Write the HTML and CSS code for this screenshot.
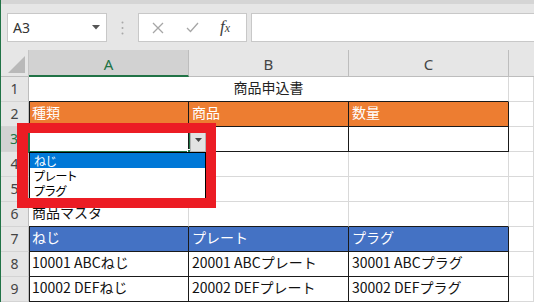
FILE: index.html
```html
<!DOCTYPE html>
<html lang="ja">
<head>
<meta charset="utf-8">
<title>商品申込書</title>
<link rel="stylesheet" href="styles.css">
</head>
<body>
<div class="app">
  <div class="topband"></div>
  <div class="fbar">
    <div class="namebox">
      <span class="nb-text">A3</span>
      <svg class="nb-arrow" width="8" height="5" viewBox="0 0 8 5"><path d="M0 0H8L4 4.5Z" fill="#555"/></svg>
    </div>
    <div class="sep">
      <svg width="3" height="14" viewBox="0 0 3 14"><circle cx="1.5" cy="1.5" r="1" fill="#a8a8a8"/><circle cx="1.5" cy="7" r="1" fill="#a8a8a8"/><circle cx="1.5" cy="12.5" r="1" fill="#a8a8a8"/></svg>
    </div>
    <div class="fbtns">
      <svg class="ic" width="12" height="12" viewBox="0 0 12 12"><path d="M1 1L11 11M11 1L1 11" stroke="#a6a6a6" stroke-width="1.3" fill="none"/></svg>
      <svg class="ic" width="13" height="11" viewBox="0 0 13 11"><path d="M1 6L4.5 9.5L12 1" stroke="#a6a6a6" stroke-width="1.3" fill="none"/></svg>
      <span class="fx">f<span class="fxx">x</span></span>
    </div>
    <div class="finput"></div>
  </div>
  <div class="sheet">
    <div class="corner"><div class="tri"></div></div>
    <div class="ch sel">A</div>
    <div class="ch">B</div>
    <div class="ch">C</div>
    <div class="ch last"></div>

    <div class="rh">1</div>
    <div class="c merged tb">商品申込書</div>
    <div class="c"></div>

    <div class="rh">2</div>
    <div class="c bk or la">種類</div>
    <div class="c bk or">商品</div>
    <div class="c bk or">数量</div>
    <div class="c"></div>

    <div class="rh sel">3</div>
    <div class="c bk la"></div>
    <div class="c bk"></div>
    <div class="c bk"></div>
    <div class="c"></div>

    <div class="rh">4</div>
    <div class="c"></div><div class="c"></div><div class="c"></div><div class="c"></div>

    <div class="rh">5</div>
    <div class="c"></div><div class="c"></div><div class="c"></div><div class="c"></div>

    <div class="rh">6</div>
    <div class="c tb">商品マスタ</div>
    <div class="c tb"></div>
    <div class="c tb"></div>
    <div class="c"></div>

    <div class="rh">7</div>
    <div class="c bk bl la">ねじ</div>
    <div class="c bk bl">プレート</div>
    <div class="c bk bl">プラグ</div>
    <div class="c"></div>

    <div class="rh">8</div>
    <div class="c bk la">10001 ABCねじ</div>
    <div class="c bk">20001 ABCプレート</div>
    <div class="c bk">30001 ABCプラグ</div>
    <div class="c"></div>

    <div class="rh">9</div>
    <div class="c bk la">10002 DEFねじ</div>
    <div class="c bk">20002 DEFプレート</div>
    <div class="c bk">30002 DEFプラグ</div>
    <div class="c"></div>

    <div class="selbox"><div class="handle"></div></div>
    <div class="ddbtn"><svg width="7" height="4" viewBox="0 0 7 4"><path d="M0 0H7L3.5 4Z" fill="#444"/></svg></div>
    <div class="ddlist">
      <div class="item hl">ねじ</div>
      <div class="item">プレート</div>
      <div class="item">プラグ</div>
    </div>
    <div class="redbox"></div>
  </div>
</div>
</body>
</html>
```
FILE: styles.css
```css
* { box-sizing: border-box; }
html, body { margin: 0; padding: 0; }
body {
  width: 534px;
  height: 302px;
  overflow: hidden;
  background: #e6e6e6;
  font-family: "Noto Sans CJK JP", "Noto Sans", sans-serif;
}
.app {
  width: 534px;
  height: 302px;
  border-left: 1px solid #217346;
  overflow: hidden;
}
.topband {
  height: 4px;
  background: #d5d5d5;
}
.fbar {
  display: flex;
  height: 29px;
  margin: 9px 0 8px 6px;
}
.namebox {
  width: 100px;
  background: #fff;
  border: 1px solid #c8c8c8;
  display: flex;
  align-items: center;
  justify-content: space-between;
  padding: 0 6px 0 5px;
}
.nb-text {
  font-family: "Noto Sans", sans-serif;
  font-size: 14px;
  color: #333;
}
.sep {
  width: 31px;
  display: flex;
  align-items: center;
  justify-content: center;
}
.fbtns {
  width: 109px;
  background: #fff;
  border: 1px solid #c8c8c8;
  display: flex;
  align-items: center;
  padding-left: 13px;
  gap: 22px;
}
.fx {
  font-family: "Liberation Serif", serif;
  font-style: italic;
  font-size: 17px;
  line-height: 17px;
  color: #3c3c3c;
  margin-left: -1px;
}
.fxx { font-size: 12px; }
.finput {
  flex: 1;
  margin-left: 4px;
  background: #fff;
  border: 1px solid #c8c8c8;
  border-right: none;
}
.sheet {
  position: relative;
  display: grid;
  grid-template-columns: 28px 160px 160px 160px 25px;
  grid-template-rows: 27px repeat(9, 25px);
  background: #fff;
}
.corner {
  background: #e6e6e6;
  border-right: 1px solid #c4c4c4;
  border-bottom: 1px solid #bdbdbd;
  position: relative;
}
.tri {
  position: absolute;
  right: 3px;
  bottom: 3px;
  width: 0;
  height: 0;
  border-left: 17px solid transparent;
  border-bottom: 17px solid #b9b9b9;
}
.ch {
  background: #e6e6e6;
  border-right: 1px solid #bdbdbd;
  border-bottom: 1px solid #bdbdbd;
  font-family: "Noto Sans", sans-serif;
  font-size: 15px;
  color: #444;
  display: flex;
  align-items: center;
  justify-content: center;
  padding-top: 2px;
}
.ch.sel {
  background: #d2d2d2;
  color: #217346;
  border-bottom: 2px solid #217346;
}
.ch.last { border-right: none; }
.rh {
  background: #e6e6e6;
  border-right: 1px solid #bdbdbd;
  border-bottom: 1px solid #d4d4d4;
  font-family: "Noto Sans", sans-serif;
  font-size: 14px;
  color: #444;
  text-align: center;
  line-height: 23px;
}
.rh.sel {
  background: #d2d2d2;
  color: #217346;
  border-right: 2px solid #217346;
}
.c {
  border-right: 1px solid #d9d9d9;
  border-bottom: 1px solid #d9d9d9;
  font-size: 14px;
  line-height: 21px;
  color: #111;
  padding-left: 3px;
  white-space: nowrap;
  overflow: hidden;
}
.merged {
  grid-column: span 3;
  text-align: center;
  padding-left: 0;
  color: #222;
}
.tb { border-bottom-color: #1a1a1a; }
.bk {
  border-right-color: #1a1a1a;
  border-bottom-color: #1a1a1a;
}
.la { box-shadow: inset 1px 0 0 #1a1a1a; }
.or { background: #ed7d31; color: #fff; }
.bl { background: #4472c4; color: #fff; }

.selbox {
  position: absolute;
  left: 27px;
  top: 75px;
  width: 163px;
  height: 28px;
  border: 2px solid #217346;
}
.handle {
  position: absolute;
  right: -5px;
  bottom: -5px;
  width: 7px;
  height: 7px;
  background: #217346;
  border: 1px solid #fff;
}
.ddbtn {
  position: absolute;
  left: 189px;
  top: 78px;
  width: 16px;
  height: 24px;
  background: #e3e3e3;
  border: 1px solid #b4b4b4;
  display: flex;
  align-items: center;
  justify-content: center;
}
.ddlist {
  position: absolute;
  left: 28px;
  top: 102px;
  width: 177px;
  height: 47px;
  background: #fff;
  border: 1px solid #000;
}
.item {
  height: 15px;
  line-height: 15px;
  font-size: 12px;
  font-feature-settings: "palt";
  padding-left: 4px;
  color: #000;
}
.item.hl {
  background: #0078d7;
  color: #fff;
}
.redbox {
  position: absolute;
  left: 16px;
  top: 73px;
  width: 199px;
  height: 85px;
  border: 10px solid #ec1c24;
  border-left-width: 11px;
}
```
